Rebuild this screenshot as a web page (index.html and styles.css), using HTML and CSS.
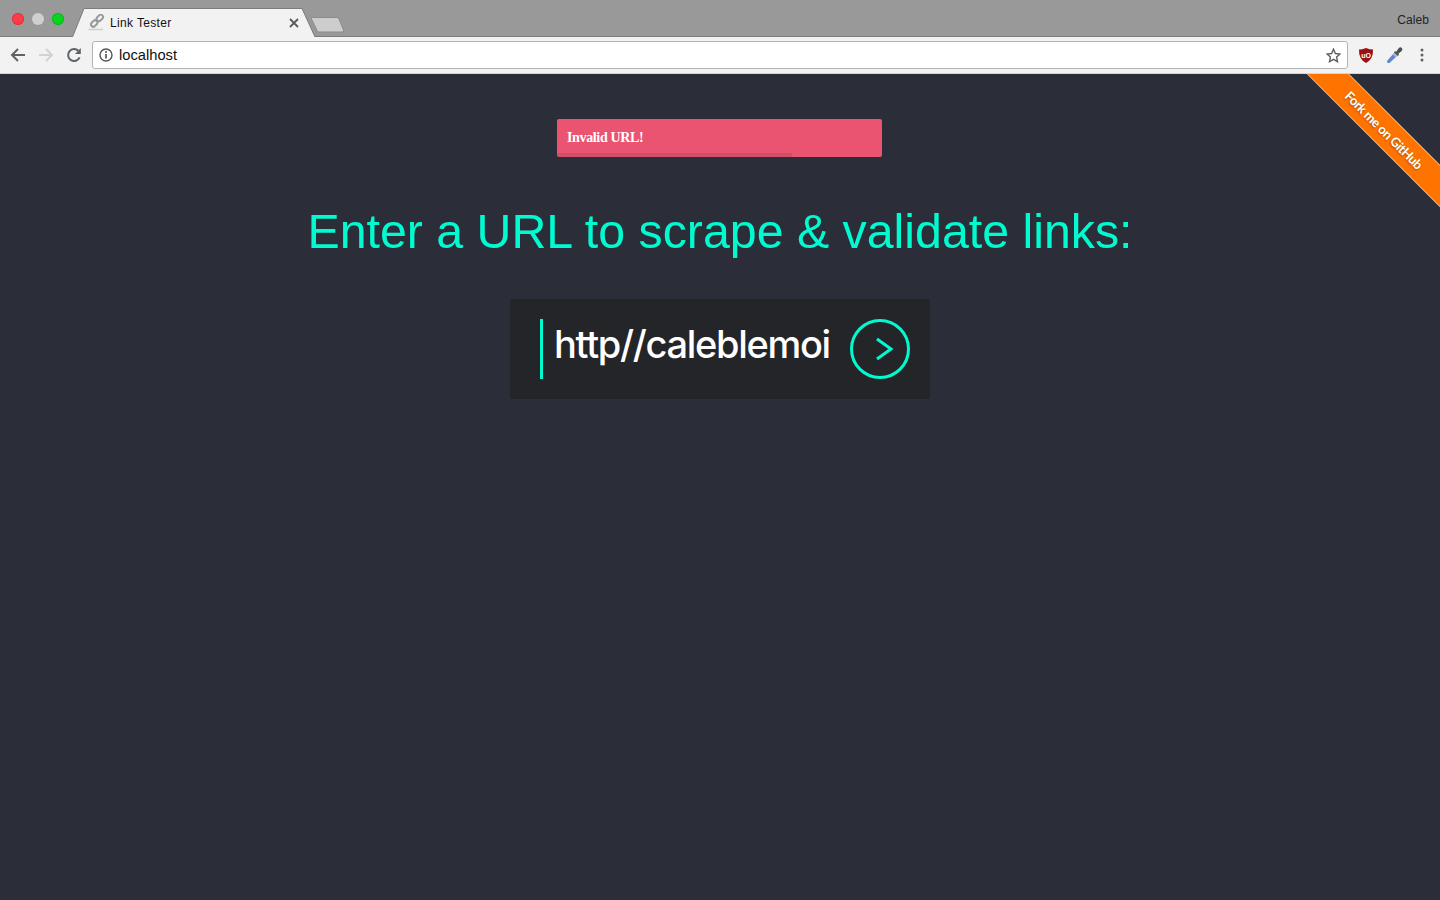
FILE: index.html
```html
<!DOCTYPE html>
<html lang="en">
<head>
    <meta charset="UTF-8">
    <meta name="viewport" content="width=device-width, initial-scale=1.0">
    <title>Link Tester</title>
    <link rel="stylesheet" href="styles.css">
</head>
<body>
    <!-- browser window chrome -->
    <div class="tabstrip">
        <div class="lights">
            <span class="light light-red"></span>
            <span class="light light-grey"></span>
            <span class="light light-green"></span>
        </div>
        <div class="tab">
            <svg class="tab-shape" width="244" height="29" viewBox="0 0 244 29">
                <path d="M0.5 29 L12 0.5 H230 L243 29" fill="#f2f2f2" stroke="#7c7c7c"/>
            </svg>
            <svg class="favicon" width="17" height="17" viewBox="0 0 17 17">
                <path d="M0.5 15.5 H15" stroke="#cfcfcf" stroke-width="1.6"/>
                <g fill="none" stroke="#9a9a9a" stroke-width="2">
                    <rect x="8.2" y="1.6" width="7.2" height="4.6" rx="2.3" transform="rotate(-45 11.8 3.9)"/>
                    <rect x="2.6" y="7.2" width="7.2" height="4.6" rx="2.3" transform="rotate(-45 6.2 9.5)"/>
                </g>
            </svg>
            <span class="tab-title">Link Tester</span>
            <svg class="tab-close" width="10" height="10" viewBox="0 0 10 10">
                <path d="M1 1 L9 9 M9 1 L1 9" stroke="#5a5a5a" stroke-width="1.8"/>
            </svg>
        </div>
        <svg class="newtab" width="36" height="18" viewBox="0 0 36 18">
            <path d="M2.5 1.5 H27 Q28.5 1.5 29 3 L33.5 14 Q34 16 32 16 H9 Q7.5 16 7 14.5 L1.5 3 Q1 1.5 2.5 1.5 Z" fill="#cdcdcd" stroke="#8a8a8a" stroke-width="1"/>
        </svg>
        <span class="profile">Caleb</span>
    </div>

    <div class="toolbar">
        <svg class="nav-icon" width="16" height="16" viewBox="0 0 16 16">
            <path d="M15 8 H2 M8 2 L2 8 L8 14" fill="none" stroke="#5f6368" stroke-width="2"/>
        </svg>
        <svg class="nav-icon" width="16" height="16" viewBox="0 0 16 16">
            <path d="M1 8 H14 M8 2 L14 8 L8 14" fill="none" stroke="#d2d2d2" stroke-width="2"/>
        </svg>
        <svg class="nav-icon" width="16" height="16" viewBox="0 0 16 16">
            <path d="M13.6 10.4 A6 6 0 1 1 12.4 3.8" fill="none" stroke="#5f6368" stroke-width="2"/>
            <path d="M14.8 1 V7 H9 Z" fill="#5f6368"/>
        </svg>
        <div class="omnibox">
            <svg class="info-icon" width="14" height="14" viewBox="0 0 14 14">
                <circle cx="7" cy="7" r="6" fill="none" stroke="#555" stroke-width="1.4"/>
                <path d="M7 6 V10.6" stroke="#555" stroke-width="1.7"/>
                <circle cx="7" cy="4" r="1" fill="#555"/>
            </svg>
            <span class="url">localhost</span>
            <svg class="star" width="15" height="15" viewBox="0 0 15 15">
                <path d="M7.5 1.2 L9.4 5.5 L14 6 L10.6 9.1 L11.5 13.7 L7.5 11.4 L3.5 13.7 L4.4 9.1 L1 6 L5.6 5.5 Z" fill="none" stroke="#5f5f5f" stroke-width="1.4"/>
            </svg>
        </div>
        <svg class="ext" width="16" height="17" viewBox="0 0 16 17">
            <path d="M8 1 Q12 2.5 15 2.5 Q15.5 12 8 16 Q0.5 12 1 2.5 Q4 2.5 8 1 Z" fill="#9b0f17"/>
            <text x="8" y="10.6" class="ext-label" text-anchor="middle">uO</text>
        </svg>
        <svg class="ext ext-dropper" width="17" height="18" viewBox="0 0 17 18">
            <path d="M1.5 17 L1 15 L8 7 L11 10 L3.5 17 Z" fill="#5b86d6"/>
            <path d="M8 7 L11 10 L9.6 11.3 L6.7 8.4 Z" fill="#a8b4cc"/>
            <path d="M9 5 L10.3 5.8 L12.8 2 Q14.4 0.4 16 2 Q17 3.8 15.4 5.2 L12.4 7.8 L13 9 L11.8 10 L8 6.4 Z" fill="#4c4f55"/>
        </svg>
        <svg class="menu-dots" width="4" height="14" viewBox="0 0 4 14">
            <circle cx="2" cy="2" r="1.5" fill="#5f6368"/>
            <circle cx="2" cy="7" r="1.5" fill="#5f6368"/>
            <circle cx="2" cy="12" r="1.5" fill="#5f6368"/>
        </svg>
    </div>

    <!-- the page itself -->
    <main class="page">
        <div class="ribbon">
            <a class="ribbon-link" href="#">Fork me on GitHub</a>
        </div>

        <div class="toast">
            <span>Invalid URL!</span>
            <span class="toast-progress"></span>
        </div>

        <h1 class="title">Enter a URL to scrape &amp; validate links:</h1>

        <form class="url-form">
            <input class="url-input" type="text" value="http//caleblemoi">
            <button class="go-button" type="button" aria-label="Go">
                <svg width="20" height="26" viewBox="0 0 20 26">
                    <path d="M3 3 L17 13 L3 23" fill="none" stroke="#00fbd0" stroke-width="3"/>
                </svg>
            </button>
        </form>
    </main>
</body>
</html>
```

FILE: styles.css
```css
* {
    box-sizing: border-box;
}
html, body {
    margin: 0;
    height: 100%;
}
body {
    display: flex;
    flex-direction: column;
    overflow: hidden;
    font-family: "Liberation Sans", Arial, sans-serif;
    background-color: #2b2e39;
}

/* window chrome */
.tabstrip {
    display: flex;
    align-items: flex-end;
    height: 37px;
    flex-shrink: 0;
    background-color: #999999;
    border-bottom: 1px solid #7c7c7c;
}
.lights {
    display: flex;
    gap: 8px;
    align-self: flex-start;
    padding: 13px 0 0 12px;
    width: 72px;
}
.light {
    width: 12px;
    height: 12px;
    border-radius: 50%;
}
.light-red {
    background-color: #fc3d47;
    box-shadow: inset 0 0 0 1px #e0333d;
}
.light-grey {
    background-color: #cfcfcf;
}
.light-green {
    background-color: #0ad41f;
    box-shadow: inset 0 0 0 1px #0bb71c;
}
.tab {
    position: relative;
    display: flex;
    align-items: center;
    width: 244px;
    height: 29px;
    margin-bottom: -1px;
    padding: 0 17px 0 16px;
    font-size: 12px;
    letter-spacing: 0.35px;
    color: #111;
}
.tab-shape {
    position: absolute;
    left: 0;
    top: 0;
}
.favicon, .tab-title, .tab-close {
    position: relative;
}
.tab-title {
    margin-left: 5px;
}
.tab-close {
    margin-left: auto;
}
.newtab {
    align-self: flex-start;
    margin: 16px 0 0 -6px;
    flex-shrink: 0;
}
.profile {
    align-self: flex-start;
    margin-left: auto;
    padding: 13px 11px 0 0;
    font-size: 12px;
    letter-spacing: 0.1px;
    color: #222;
}
.toolbar {
    display: flex;
    align-items: center;
    height: 37px;
    flex-shrink: 0;
    padding: 0 0 0 10px;
    background-color: #f2f2f2;
    border-bottom: 1px solid #d5d5d5;
}
.nav-icon {
    margin-right: 12px;
    flex-shrink: 0;
}
.omnibox {
    display: flex;
    align-items: center;
    width: 1256px;
    height: 28px;
    margin-left: -2px;
    padding: 0 6px;
    background-color: #fff;
    border: 1px solid #b4b4b4;
    border-radius: 3px;
}
.url {
    margin-left: 6px;
    font-size: 14.7px;
    color: #111;
}
.star {
    margin-left: auto;
}
.ext {
    margin-left: 10px;
    flex-shrink: 0;
}
.ext-dropper {
    margin-left: 12px;
}
.ext-label {
    font-family: "Liberation Sans", Arial, sans-serif;
    font-size: 7px;
    font-weight: bold;
    fill: #fff;
}
.menu-dots {
    margin-left: 17px;
    flex-shrink: 0;
}

/* page */
.page {
    position: relative;
    flex: 1;
    display: flex;
    flex-direction: column;
    align-items: center;
    padding-top: 45px;
    overflow: hidden;
}
.ribbon {
    position: absolute;
    top: 0;
    right: 0;
    width: 150px;
    height: 150px;
    overflow: hidden;
}
.ribbon-link {
    position: absolute;
    left: -16px;
    top: 41px;
    width: 220px;
    height: 30px;
    line-height: 28px;
    transform: rotate(45deg);
    text-align: center;
    font-family: Lato, sans-serif;
    font-size: 13px;
    font-weight: bold;
    letter-spacing: -0.4px;
    color: #fff;
    text-decoration: none;
    text-shadow: 0 1px 2px rgba(0, 0, 0, 0.4);
    background-color: #ff7300;
    border-top: 1px solid #ffa04d;
    border-bottom: 1px solid #ffa04d;
}
.toast {
    position: relative;
    width: 325px;
    height: 38px;
    margin-right: 1px;
    padding: 0 10px;
    line-height: 37px;
    font-family: "Liberation Serif", "Times New Roman", serif;
    font-size: 14px;
    font-weight: bold;
    letter-spacing: -0.35px;
    color: #fff;
    background-color: #eb5470;
    border-radius: 2px;
}
.toast-progress {
    position: absolute;
    left: 0;
    bottom: 0;
    width: 235px;
    height: 4px;
    background-color: rgba(60, 60, 60, 0.16);
}
.title {
    margin: 42px 0 0;
    font-size: 48.3px;
    font-weight: normal;
    line-height: 64px;
    color: #00fbd0;
}
.url-form {
    display: flex;
    align-items: center;
    width: 420px;
    height: 100px;
    margin-top: 36px;
    padding: 0 20px 0 30px;
    background-color: #242529;
}
.url-input {
    width: 300px;
    height: 60px;
    padding: 0 0 10px 11px;
    font-family: Inter, sans-serif;
    font-size: 38px;
    font-weight: 500;
    letter-spacing: -1.3px;
    color: #fff;
    background: transparent;
    border: none;
    border-left: 3px solid #00fbd0;
    border-radius: 0;
    outline: none;
}
.go-button {
    display: flex;
    align-items: center;
    justify-content: center;
    width: 60px;
    height: 60px;
    margin-left: auto;
    padding: 0 0 0 8px;
    background: transparent;
    border: 3px solid #00fbd0;
    border-radius: 50%;
}
```
